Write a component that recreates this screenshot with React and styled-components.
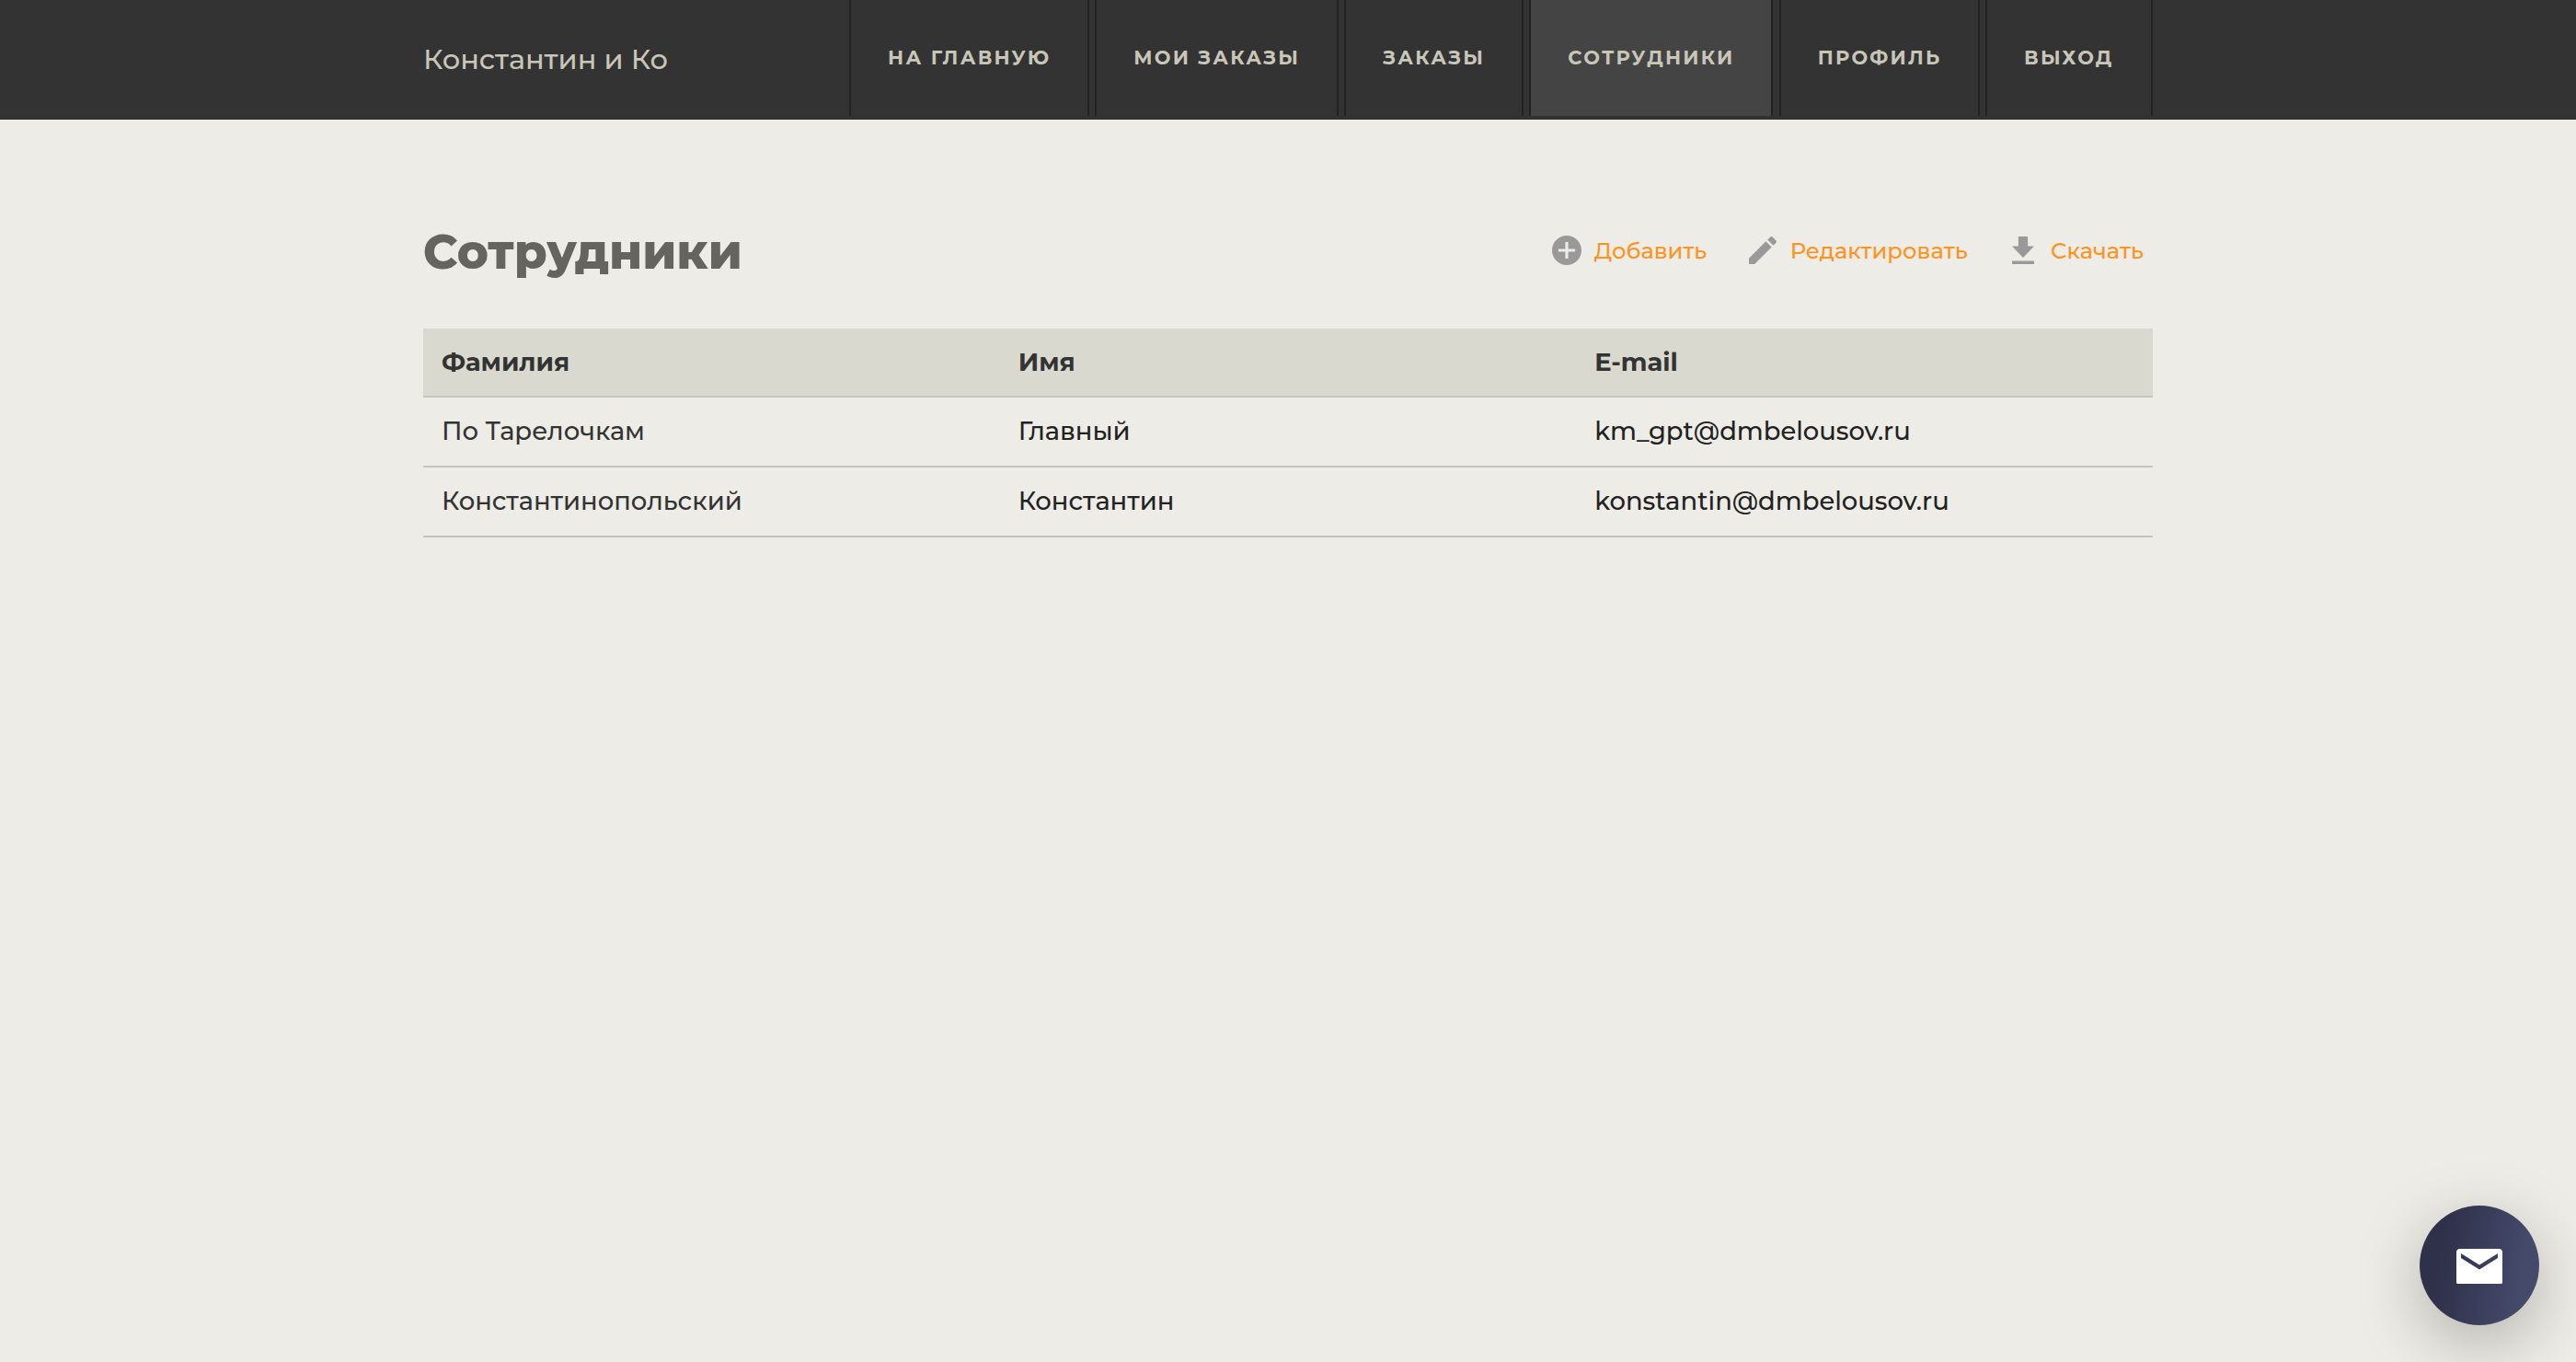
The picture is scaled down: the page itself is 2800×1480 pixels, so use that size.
import React from 'react';
import styled, { createGlobalStyle } from 'styled-components';

const GlobalStyle = createGlobalStyle`
  body {
    margin: 0;
    background-color: #edece6;
    font-family: Montserrat, Inter, "Open Sans", sans-serif;
    font-weight: 500;
    color: #222;
  }

  a {
    text-decoration: none;
  }
`;

const Page = styled.div`
  min-height: 100vh;
`;

const Header = styled.header`
  background-color: #333;
  border-bottom: 4px solid #323232;
`;

const Container = styled.div`
  width: 1880px;
  margin: 0 auto;
`;

const HeaderInner = styled(Container)`
  display: flex;
  justify-content: space-between;
  align-items: center;
  height: 126px;
`;

const Logo = styled.a`
  padding-top: 2px;
  font-size: 30.4px;
  color: #c8c6b8;
`;

const Nav = styled.nav`
  display: flex;
  gap: 6.2px;
  height: 100%;
`;

const NavLink = styled.a`
  display: flex;
  align-items: center;
  width: ${(props) => props.$width}px;
  box-sizing: border-box;
  padding: 0 0 2px 40px;
  border-left: 2px solid #222;
  border-right: 2px solid #222;
  background-color: ${(props) => (props.$active ? '#444' : 'transparent')};
  color: #c8c6b8;
  font-size: 21px;
  font-weight: 700;
  letter-spacing: 2.25px;
  text-transform: uppercase;
  white-space: nowrap;
`;

const Main = styled(Container)`
  padding-top: 103px;
`;

const TitleRow = styled.div`
  display: flex;
  justify-content: space-between;
  align-items: center;
  height: 80px;
  margin-bottom: 44px;
`;

const Title = styled.h1`
  margin: 0;
  font-size: 51.6px;
  font-weight: 800;
  color: #66645f;
`;

const Actions = styled.div`
  display: flex;
  gap: 44.5px;
  padding: 0 10px 2px 0;
`;

const Action = styled.a`
  display: flex;
  align-items: center;
  gap: 14px;
  font-size: 24.25px;
  color: #ff931e;
`;

const ActionIcon = styled.span`
  display: flex;
  justify-content: center;
  width: 32px;

  svg {
    display: block;
    fill: #999;
  }
`;

const Table = styled.table`
  width: 100%;
  table-layout: fixed;
  border-collapse: separate;
  border-spacing: 0;
  font-size: 27.4px;
`;

const Th = styled.th`
  height: 71px;
  padding: 0 20px 2px;
  background-color: #d9d9cf;
  border-bottom: 2px solid #c5c5b8;
  color: #333;
  font-weight: 700;
  text-align: left;
`;

const Td = styled.td`
  height: 72px;
  padding: 0 20px 2px;
  border-bottom: 2px solid #c5c5b8;

  &:first-child {
    color: #333;
  }
`;

const MailButton = styled.button`
  position: fixed;
  right: 40px;
  bottom: 40px;
  display: flex;
  align-items: center;
  justify-content: center;
  width: 130px;
  height: 130px;
  padding: 2px 0 0;
  border: none;
  border-radius: 50%;
  background: linear-gradient(99deg, #2f3049 20%, #454a6b 82%);
  box-shadow: 0 20px 70px rgba(0, 0, 0, 0.25);
  cursor: pointer;

  svg {
    display: block;
    fill: #fff;
  }
`;

const links = [
  { title: 'На главную', width: 261 },
  { title: 'Мои заказы', width: 264.9 },
  { title: 'Заказы', width: 194.8 },
  { title: 'Сотрудники', width: 265.1, active: true },
  { title: 'Профиль', width: 218.2 },
  { title: 'Выход', width: 182 },
];

const employees = [
  { lastName: 'По Тарелочкам', firstName: 'Главный', email: 'km_gpt@dmbelousov.ru' },
  { lastName: 'Константинопольский', firstName: 'Константин', email: 'konstantin@dmbelousov.ru' },
];

const AddIcon = () => (
  <svg width="32" height="32" viewBox="2 2 20 20">
    <path d="M12 2C6.48 2 2 6.48 2 12s4.48 10 10 10 10-4.48 10-10S17.52 2 12 2zm5.7 11h-4.700v4.700h-2v-4.700H6.300v-2h4.700V6.300h2v4.700h4.700v2z" />
  </svg>
);

const EditIcon = () => (
  <svg width="30" height="30" viewBox="3 3 18 18">
    <path d="M3 17.25V21h3.75L17.81 9.94l-3.75-3.75L3 17.25zM20.71 7.04c.39-.39.39-1.02 0-1.41l-2.34-2.34c-.39-.39-1.02-.39-1.41 0l-1.83 1.83 3.75 3.75 1.83-1.83z" />
  </svg>
);

const DownloadIcon = () => (
  <svg width="24" height="30" viewBox="5 3 14 17" preserveAspectRatio="none">
    <path d="M19 9h-4V3H9v6H5l7 7 7-7zM5 18v2h14v-2H5z" />
  </svg>
);

function App() {
  return (
    <Page>
      <GlobalStyle />
      <Header>
        <HeaderInner>
          <Logo href="#">Константин и Ко</Logo>
          <Nav>
            {links.map((link) => (
              <NavLink key={link.title} href="#" $width={link.width} $active={link.active}>
                {link.title}
              </NavLink>
            ))}
          </Nav>
        </HeaderInner>
      </Header>

      <Main as="main">
        <TitleRow>
          <Title>Сотрудники</Title>
          <Actions>
            <Action href="#">
              <ActionIcon><AddIcon /></ActionIcon>
              Добавить
            </Action>
            <Action href="#">
              <ActionIcon><EditIcon /></ActionIcon>
              Редактировать
            </Action>
            <Action href="#">
              <ActionIcon><DownloadIcon /></ActionIcon>
              Скачать
            </Action>
          </Actions>
        </TitleRow>

        <Table>
          <thead>
            <tr>
              <Th>Фамилия</Th>
              <Th>Имя</Th>
              <Th>E-mail</Th>
            </tr>
          </thead>
          <tbody>
            {employees.map((employee) => (
              <tr key={employee.email}>
                <Td>{employee.lastName}</Td>
                <Td>{employee.firstName}</Td>
                <Td>{employee.email}</Td>
              </tr>
            ))}
          </tbody>
        </Table>
      </Main>

      <MailButton type="button" aria-label="Написать письмо">
        <svg width="50" height="38" viewBox="0 0 50 38">
          <path d="M4 0h42a4 4 0 0 1 4 4v32.500a1.500 1.500 0 0 1-1.500 1.500h-47a1.500 1.500 0 0 1-1.500-1.500V4a4 4 0 0 1 4-4zM5 5v5l20 12.500L45 10V5L25 17.500z" />
        </svg>
      </MailButton>
    </Page>
  );
}

export default App;
